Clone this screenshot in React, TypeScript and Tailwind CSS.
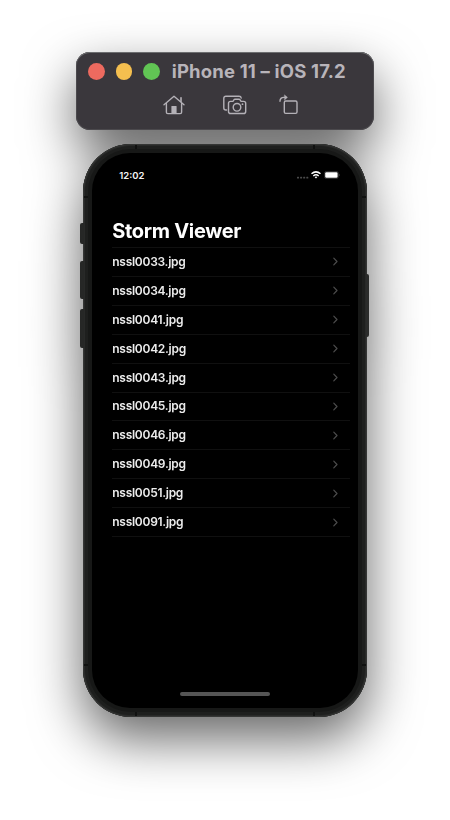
import React from "react";

const files = [
  "nssl0033.jpg",
  "nssl0034.jpg",
  "nssl0041.jpg",
  "nssl0042.jpg",
  "nssl0043.jpg",
  "nssl0045.jpg",
  "nssl0046.jpg",
  "nssl0049.jpg",
  "nssl0051.jpg",
  "nssl0091.jpg",
];

function HomeIcon() {
  return (
    <svg width="22" height="20" viewBox="0 0 22 20" fill="none" stroke="#b4b1b7" strokeWidth="1.4" strokeLinecap="round" strokeLinejoin="round">
      <path d="M1 9.8 11 1.2 21 9.8" />
      <path d="M3.4 8.4V17.2Q3.4 18.6 4.8 18.6H17.2Q18.6 18.6 18.6 17.2V8.4" />
      <path d="M18 6.5V2.8" strokeWidth="1.6" />
      <path d="M8.4 18.4V11.6Q8.4 11 9 11H13Q13.6 11 13.6 11.6V18.4Z" fill="#b4b1b7" stroke="none" />
    </svg>
  );
}

function ScreenshotIcon() {
  return (
    <svg width="24" height="20" viewBox="0 0 24 20" fill="none" stroke="#b4b1b7" strokeWidth="1.4" strokeLinecap="round" strokeLinejoin="round">
      <path d="M3.6 15H2.9Q.8 15 .8 12.9V3.3Q.8 1.2 2.9 1.2H16Q18 1.2 18.2 3" />
      <path d="M7.6 6.4H9.3Q9.9 6.4 10.3 5.8L10.9 4.9Q11.3 4.3 12 4.3H16Q16.7 4.3 17.1 4.9L17.7 5.8Q18.1 6.4 18.7 6.4H20.6Q22.7 6.4 22.7 8.5V16.4Q22.7 18.5 20.6 18.5H7.6Q5.5 18.5 5.5 16.4V8.5Q5.5 6.4 7.6 6.4Z" />
      <circle cx="14" cy="12.3" r="3.8" />
      <circle cx="19.5" cy="9.2" r=".9" fill="#b4b1b7" stroke="none" />
    </svg>
  );
}

function RotateIcon() {
  return (
    <svg width="20" height="21" viewBox="0 0 20 21" fill="none" stroke="#b4b1b7" strokeWidth="1.4" strokeLinecap="round" strokeLinejoin="round">
      <rect x="5.3" y="7" width="12.7" height="12.4" rx="1.4" />
      <path d="M1 7.3Q1 3.4 5 3.4H7.5" />
      <path d="M5.7 1.1 8.4 3.4 5.7 5.8Z" fill="#b4b1b7" strokeWidth=".5" />
    </svg>
  );
}

function Toolbar() {
  return (
    <header className="h-[78px] w-[297.5px] rounded-[14px] bg-[#3a373c] shadow-[inset_0_1px_0_#6c6d6f,inset_0_0_0_1px_#4b494d]">
      <div className="flex h-[39px] items-center pl-[12px]">
        <div className="flex gap-[11px]">
          <span className="size-[16.5px] rounded-full bg-[#ed6a5f]" />
          <span className="size-[16.5px] rounded-full bg-[#f5bf4f]" />
          <span className="size-[16.5px] rounded-full bg-[#61c554]" />
        </div>
        <h1 className="-mt-px ml-[12px] whitespace-nowrap text-[18.5px] font-bold leading-[22px] tracking-[0.17px] text-[#b8b4ba]">iPhone 11 – iOS 17.2</h1>
      </div>
      <div className="flex pl-[86.5px] pt-[4px]">
        <HomeIcon />
        <span className="ml-[38px]"><ScreenshotIcon /></span>
        <span className="-mt-px ml-[32px]"><RotateIcon /></span>
      </div>
    </header>
  );
}

function StatusBar() {
  return (
    <div className="flex h-[14px] items-center justify-between pl-[27px] pr-[18px]">
      <span className="mt-px text-[9.5px] font-semibold leading-[14px] text-[#f4f4f4]">12:02</span>
      <div className="flex items-center">
        <svg width="12" height="10" viewBox="0 0 12 10" fill="#4b4b4b">
          <rect x="0" y="6.8" width="2" height="1.6" rx=".5" />
          <rect x="3.1" y="6.8" width="2" height="1.6" rx=".5" />
          <rect x="6.2" y="6.8" width="2" height="1.6" rx=".5" />
          <rect x="9.3" y="6.8" width="2" height="1.6" rx=".5" />
        </svg>
        <svg className="ml-[2px]" width="10" height="8" viewBox="0 0 10 8" fill="none" stroke="#fff" strokeWidth="1.5">
          <path d="M.5 2.8Q5-1.1 9.5 2.8" />
          <path d="M2.3 4.9Q5 2.5 7.7 4.9" strokeWidth="1.3" />
          <path d="M3.6 6.1Q5 5.1 6.4 6.1L5 7.6Z" fill="#fff" stroke="none" />
        </svg>
        <svg className="ml-[3px]" width="16" height="8" viewBox="0 0 16 8">
          <rect x=".4" y=".4" width="14" height="7.2" rx="2.2" fill="none" stroke="#444" strokeWidth=".7" />
          <rect x="1.2" y="1.2" width="12.4" height="5.6" rx="1.2" fill="#fff" />
          <path d="M15 2.8Q16 4 15 5.2Z" fill="#777" />
        </svg>
      </div>
    </div>
  );
}

function Phone() {
  return (
    <div className="relative mt-[14px] h-[573px] w-[283.5px] rounded-[48px] bg-[#171817] px-[9px] py-[9px] shadow-[inset_0_0_0_1px_#353635,inset_0_0_0_2px_#282928,inset_0_0_0_5px_#1e1f1e]">
      <i className="absolute -left-[3px] top-[78.5px] h-[21px] w-[4px] rounded-l-[2px] bg-[#262726]" />
      <i className="absolute -left-[3px] top-[116.5px] h-[38px] w-[4px] rounded-l-[2px] bg-[#262726]" />
      <i className="absolute -left-[3px] top-[164.5px] h-[39px] w-[4px] rounded-l-[2px] bg-[#262726]" />
      <i className="absolute -right-[2.5px] top-[130px] h-[63px] w-[3.5px] rounded-r-[2px] bg-[#2b2c2b]" />
      <i className="absolute left-[52px] top-px h-[4px] w-[2px] bg-[#101110]" />
      <i className="absolute right-[52px] top-px h-[4px] w-[2px] bg-[#101110]" />
      <i className="absolute bottom-px left-[52px] h-[4px] w-[2px] bg-[#101110]" />
      <i className="absolute bottom-px right-[52px] h-[4px] w-[2px] bg-[#101110]" />
      <i className="absolute left-px top-[52px] h-[2px] w-[4px] bg-[#101110]" />
      <i className="absolute right-px top-[52px] h-[2px] w-[4px] bg-[#101110]" />
      <i className="absolute bottom-[51px] left-px h-[2px] w-[4px] bg-[#101110]" />
      <i className="absolute bottom-[51px] right-px h-[2px] w-[4px] bg-[#101110]" />
      <main className="flex h-full flex-col rounded-[38px] bg-black pt-[15px]">
        <StatusBar />
        <h2 className="ml-[20px] mt-[36px] h-[29px] whitespace-nowrap text-[20px] font-bold leading-[27px] tracking-[-0.3px] text-white">Storm Viewer</h2>
        <ul className="ml-[20px] mr-[8px] border-t border-[#101010]">
          {files.map((file) => (
            <li key={file} className="flex h-[28.92px] items-center justify-between border-b border-[#101010] pr-[11px]">
              <span className="text-[12px] font-semibold leading-[16px] tracking-[-0.27px] text-[#ececec]">{file}</span>
              <svg width="7" height="9" viewBox="0 0 7 9" fill="none" stroke="#4c4c4c" strokeWidth="1.2" strokeLinecap="round" strokeLinejoin="round">
                <path d="M1.8 1.2 5 4.5 1.8 7.8" />
              </svg>
            </li>
          ))}
        </ul>
        <div className="mx-auto mb-[12.5px] mt-auto h-[4px] w-[90px] rounded-full bg-[#555]" />
      </main>
    </div>
  );
}

export default function App() {
  return (
    <div className="h-[820px] w-[450px] overflow-hidden bg-white font-['Inter','Liberation_Sans',sans-serif]">
      <div className="flex h-full flex-col items-center pt-[52px] drop-shadow-[0_22px_26px_rgba(0,0,0,0.6)]">
        <Toolbar />
        <Phone />
      </div>
    </div>
  );
}
